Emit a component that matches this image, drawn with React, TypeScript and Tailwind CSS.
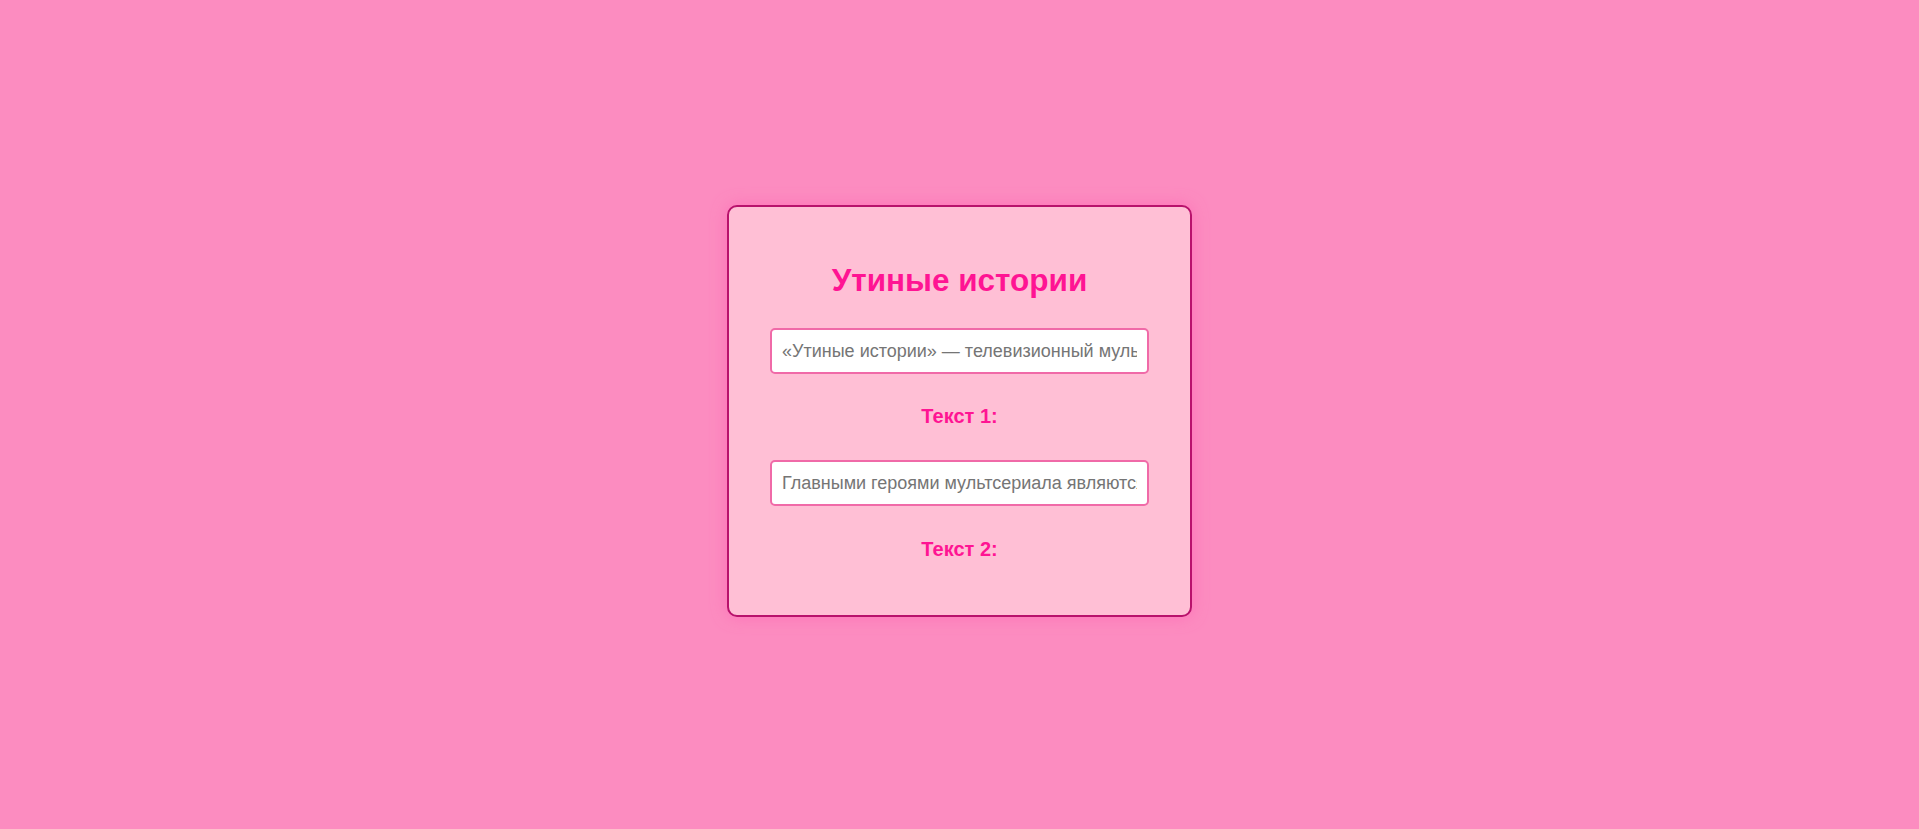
export default function App() {
  return (
    <div className="min-h-screen w-full bg-[#fc8cc0] flex items-center justify-center pb-[7px] font-['Liberation_Sans',Arial,sans-serif]">
      <div className="w-[465px] bg-[#ffbfd5] border-2 border-[#b8126c] rounded-[10px] shadow-[0_0_16px_rgba(255,105,180,0.75)] px-[41px] pt-[55px] pb-[54px] flex flex-col items-center">
        <h1 className="text-[31.5px] font-bold text-[#ff1493] leading-[37px]">Утиные истории</h1>
        <input
          type="text"
          placeholder="«Утиные истории» — телевизионный мультсериал"
          className="mt-[29px] w-full h-[46px] px-[10px] text-[18px] bg-white border-2 border-[#f06aa8] rounded-[5px] outline-none placeholder:text-[#757575]"
        />
        <h3 className="mt-[31px] text-[20px] font-bold text-[#ff1493] leading-[23px]">Текст 1:</h3>
        <input
          type="text"
          placeholder="Главными героями мультсериала являются"
          className="mt-[32px] w-full h-[46px] px-[10px] text-[18px] bg-white border-2 border-[#f06aa8] rounded-[5px] outline-none placeholder:text-[#757575]"
        />
        <h3 className="mt-[32px] text-[20px] font-bold text-[#ff1493] leading-[23px]">Текст 2:</h3>
      </div>
    </div>
  );
}
